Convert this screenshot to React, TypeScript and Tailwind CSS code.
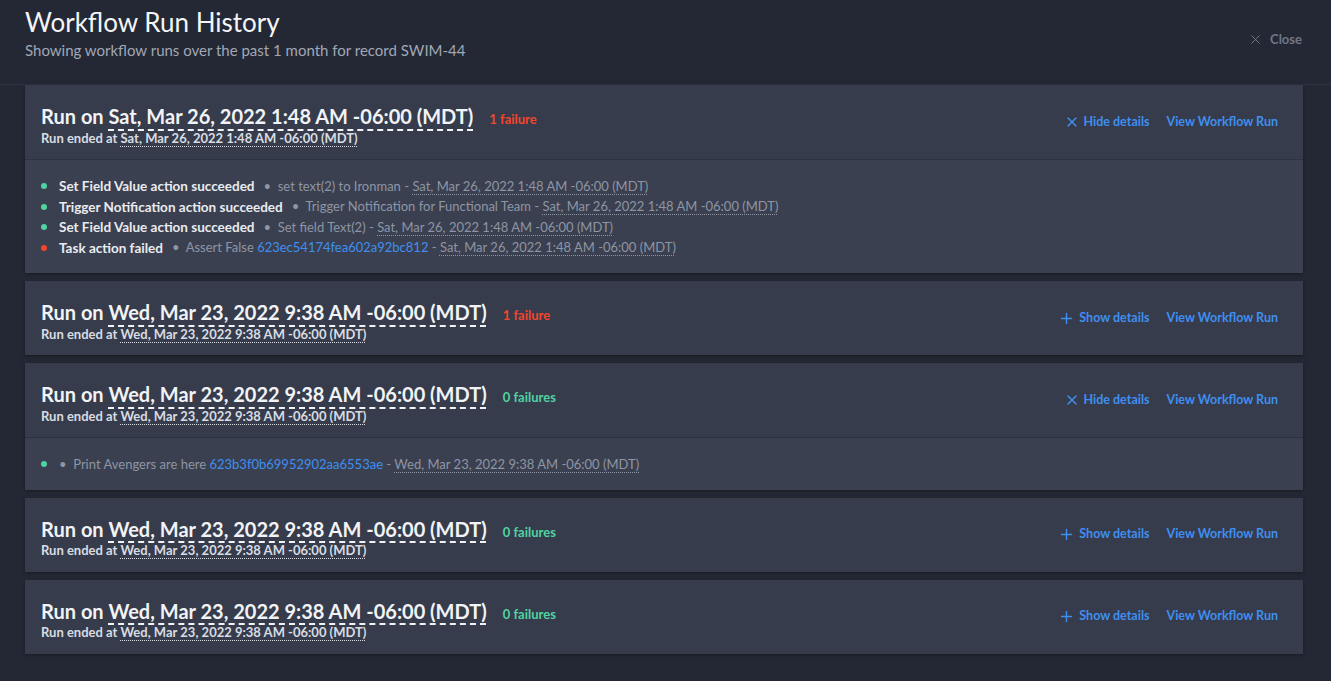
import { Plus, X } from 'lucide-react';

type Action = {
  status: 'ok' | 'fail';
  label?: string;
  desc: string;
  id?: string;
  at: string;
};

type Run = {
  at: string;
  failures: number;
  open: boolean;
  actions?: Action[];
};

const sat = 'Sat, Mar 26, 2022 1:48 AM -06:00 (MDT)';
const wed = 'Wed, Mar 23, 2022 9:38 AM -06:00 (MDT)';

const runs: Run[] = [
  {
    at: sat,
    failures: 1,
    open: true,
    actions: [
      { status: 'ok', label: 'Set Field Value action succeeded', desc: 'set text(2) to Ironman', at: sat },
      {
        status: 'ok',
        label: 'Trigger Notification action succeeded',
        desc: 'Trigger Notification for Functional Team',
        at: sat,
      },
      { status: 'ok', label: 'Set Field Value action succeeded', desc: 'Set field Text(2)', at: sat },
      { status: 'fail', label: 'Task action failed', desc: 'Assert False', id: '623ec54174fea602a92bc812', at: sat },
    ],
  },
  { at: wed, failures: 1, open: false },
  {
    at: wed,
    failures: 0,
    open: true,
    actions: [{ status: 'ok', desc: 'Print Avengers are here', id: '623b3f0b69952902aa6553ae', at: wed }],
  },
  { at: wed, failures: 0, open: false },
  { at: wed, failures: 0, open: false },
];

const font = { fontFamily: "'Source Sans Pro', Lato, 'Open Sans', sans-serif" };

function Stamp({ children, thick }: { children: string; thick?: boolean }) {
  return (
    <span
      className={
        thick
          ? 'underline decoration-dashed decoration-[1.5px] underline-offset-[5px]'
          : 'underline decoration-dotted decoration-1 underline-offset-[3px]'
      }
    >
      {children}
    </span>
  );
}

function RunCard({ run }: { run: Run }) {
  return (
    <div className="shadow-[0_1px_3px_rgba(0,0,0,0.35)]">
      <div className="flex h-[74px] items-start justify-between bg-[#363c4b] pl-4 pr-[25px] pt-[19px]">
        <div className="flex flex-col">
          <div className="flex items-baseline">
            <span className="text-[20px] font-bold leading-[24px] text-[#f1f3f6]">
              Run on <Stamp thick>{run.at}</Stamp>
            </span>
            <span
              className={`ml-4 text-[13px] font-bold ${run.failures > 0 ? 'text-[#f4452b]' : 'text-[#4fd3a1]'}`}
            >
              {run.failures} {run.failures === 1 ? 'failure' : 'failures'}
            </span>
          </div>
          <div className="text-[13px] font-bold leading-[16px] text-[#d9dce3]">
            Run ended at <Stamp>{run.at}</Stamp>
          </div>
        </div>
        <div className="flex items-center gap-[17px] self-center pb-[19px] text-[12.5px] font-bold text-[#3f8ff0]">
          <span className="flex items-center gap-[4px]">
            {run.open ? <X size={16} strokeWidth={2} /> : <Plus size={17} strokeWidth={2} />}
            {run.open ? 'Hide details' : 'Show details'}
          </span>
          <span>View Workflow Run</span>
        </div>
      </div>
      {run.open && run.actions ? (
        <div className="border-t border-[#2d3240] bg-[#3a4050] px-4 pt-[16px] pb-[15px]">
          {run.actions.map((a, i) => (
            <div key={i} className="flex h-[20.5px] items-center">
              <span
                className={`h-[6px] w-[6px] shrink-0 rounded-full ${a.status === 'ok' ? 'bg-[#4fd3a1]' : 'bg-[#f4452b]'}`}
              />
              {a.label ? <span className="ml-[12px] text-[13.5px] font-bold text-[#e9ebef]">{a.label}</span> : null}
              <span className={`${a.label ? 'ml-[9px]' : 'ml-[12px]'} whitespace-pre text-[13px] text-[#8e95a4]`}>
                {'•  '}
                {a.desc}
                {a.id ? (
                  <>
                    {' '}
                    <span className="text-[#3f8ff0]">{a.id}</span>
                  </>
                ) : null}
                {' - '}
                <Stamp>{a.at}</Stamp>
              </span>
            </div>
          ))}
        </div>
      ) : null}
    </div>
  );
}

export default function App() {
  return (
    <div className="h-[681px] overflow-hidden bg-[#232834]" style={font}>
      <header className="flex h-[85px] items-start justify-between border-b border-[#2f3442] px-[25px] pt-[5px]">
        <div>
          <h1 className="text-[26px] leading-[34px] text-[#f4f5f7]">Workflow Run History</h1>
          <p className="text-[15px] text-[#a1a7b5]">Showing workflow runs over the past 1 month for record SWIM-44</p>
        </div>
        <div className="mt-[25px] mr-[4px] flex items-center gap-[7px] text-[13px] font-bold text-[#6f7689]">
          <X size={15} strokeWidth={1.6} />
          Close
        </div>
      </header>
      <div className="flex flex-col gap-2 pl-[25px] pr-[28px]">
        {runs.map((run, i) => (
          <RunCard key={i} run={run} />
        ))}
      </div>
    </div>
  );
}
